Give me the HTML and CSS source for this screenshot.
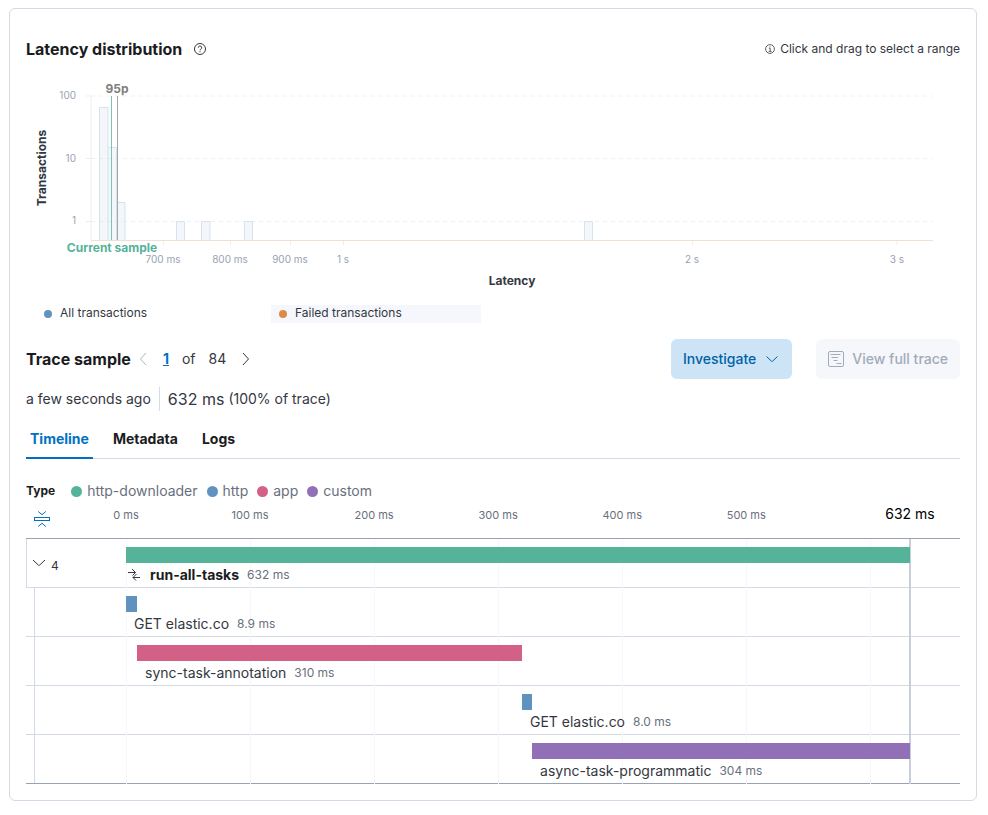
FILE: index.html
```html
<!DOCTYPE html>
<html lang="en">
<head>
<meta charset="utf-8">
<title>Latency distribution</title>
<link rel="stylesheet" href="styles.css">
</head>
<body>
<main class="panel">
  <header class="panel-header">
    <h2 class="title">Latency distribution</h2>
    <svg class="help" width="12" height="12" viewBox="0 0 12 12" role="img" aria-label="Help">
      <circle cx="6" cy="6" r="5.5"/>
      <path d="M4.3 4.7a1.7 1.7 0 1 1 2.5 1.5c-.6.3-.8.6-.8 1.2M6 8.3v1"/>
    </svg>
    <p class="hint">
      <svg width="10" height="10" viewBox="0 0 10 10" aria-hidden="true">
        <circle cx="5" cy="5" r="4.4"/>
        <path d="M3.9 4.2H5.2V7.3M3.7 7.4H6.6M5 2.3v1"/>
      </svg>
      Click and drag to select a range
    </p>
  </header>

  <svg class="chart" viewBox="26 73 934 220" role="img" aria-label="Transactions by latency">
    <g class="grid">
      <path d="M91 96H933M91 158.5H933M91 221.5H933"/>
    </g>
    <path class="axis" d="M86 96H91M86 158.5H91M86 221.5H91M91 96V240M163.5 241V245M230.5 241V245M290.5 241V245M343.5 241V245M692.5 241V245M897 241V245"/>
    <g class="histogram">
      <path d="M99.5 240V107.5H108V147.5H116.5V202.5H125V240M108 147.5V240M116.5 202.5V240"/>
      <path d="M176.5 240V221.5H184.5V240"/>
      <path d="M201.5 240V221.5H210V240"/>
      <path d="M244.5 240V221.5H252.5V240"/>
      <path d="M584.5 240V221.5H592.5V240"/>
    </g>
    <path class="baseline" d="M91 240.5H933"/>
    <path class="mark-sample" d="M111.5 96V240"/>
    <path class="mark-95p" d="M117.5 96V240"/>
    <g class="tick-y">
      <text x="76" y="99">100</text>
      <text x="76" y="162">10</text>
      <text x="76" y="224">1</text>
    </g>
    <g class="tick-x">
      <text x="163" y="263">700 ms</text>
      <text x="230" y="263">800 ms</text>
      <text x="290" y="263">900 ms</text>
      <text x="343" y="263">1 s</text>
      <text x="692" y="263">2 s</text>
      <text x="897" y="263">3 s</text>
    </g>
    <text class="note-95p" x="117" y="93">95p</text>
    <text class="note-sample" x="112" y="252">Current sample</text>
    <text class="axis-title" x="512" y="285">Latency</text>
    <text class="axis-title" transform="translate(46 168) rotate(-90)">Transactions</text>
  </svg>

  <ul class="chart-legend">
    <li><span class="dot dot-small blue"></span>All transactions</li>
    <li class="active"><span class="dot dot-small orange"></span>Failed transactions</li>
  </ul>

  <section class="trace-header">
    <h2 class="title">Trace sample</h2>
    <nav class="pager" aria-label="Trace samples">
      <button class="arrow" disabled aria-label="Previous sample">
        <svg width="8" height="14" viewBox="0 0 8 14"><path d="M7 1L1.5 7L7 13"/></svg>
      </button>
      <a class="current" href="#sample">1</a>
      <span>of</span>
      <span>84</span>
      <button class="arrow" aria-label="Next sample">
        <svg width="8" height="14" viewBox="0 0 8 14"><path d="M1 1L6.5 7L1 13"/></svg>
      </button>
    </nav>
    <div class="actions">
      <button class="button primary">Investigate
        <svg width="16" height="16" viewBox="0 0 16 16" aria-hidden="true"><path d="M2.500 5.500L7.600 10.300Q8 10.700 8.400 10.300L13.500 5.500"/></svg>
      </button>
      <button class="button muted" disabled>
        <svg width="16" height="16" viewBox="0 0 16 16" aria-hidden="true"><rect x="0.5" y="0.5" width="15" height="15" rx="1.5"/><path d="M2.500 3.500H12.500M3.500 6.500H10M5.500 9.500H9.500M8.500 12.500H13.500"/></svg>
        View full trace
      </button>
    </div>
  </section>

  <p class="summary">
    <span class="age">a few seconds ago</span>
    <span class="duration">632 ms</span>
    <span>(100% of trace)</span>
  </p>

  <nav class="tabs">
    <a class="tab selected" href="#timeline">Timeline</a>
    <a class="tab" href="#metadata">Metadata</a>
    <a class="tab" href="#logs">Logs</a>
  </nav>

  <div class="type-legend">
    <strong>Type</strong>
    <ul>
      <li><span class="dot green"></span>http-downloader</li>
      <li><span class="dot blue"></span>http</li>
      <li><span class="dot pink"></span>app</li>
      <li><span class="dot purple"></span>custom</li>
    </ul>
  </div>

  <section class="timeline" id="timeline">
    <div class="scale">
      <button class="fold" aria-label="Collapse all">
        <svg width="16" height="16" viewBox="0 0 16 16"><rect x="0.5" y="6.5" width="15" height="3"/><path d="M4.2 .5L8 3.700L11.800 .5M4.200 15.500L8 12.300L11.800 15.500"/></svg>
      </button>
      <div class="ticks">
        <span class="tick">0 ms</span>
        <span class="tick">100 ms</span>
        <span class="tick">200 ms</span>
        <span class="tick">300 ms</span>
        <span class="tick">400 ms</span>
        <span class="tick">500 ms</span>
        <span></span>
        <span class="tick total">632 ms</span>
      </div>
    </div>
    <div class="rows">
      <div class="guides" aria-hidden="true">
        <i></i><i></i><i></i><i></i><i></i><i></i><i class="last"></i>
      </div>
      <div class="row root">
        <button class="toggle" aria-expanded="true">
          <svg width="14" height="8" viewBox="0 0 14 8" aria-hidden="true"><path d="M1 1L6.600 6.300Q7 6.700 7.400 6.300L13 1"/></svg>
          <span>4</span>
        </button>
        <div class="track">
          <div class="bar green" style="width:100%"></div>
          <div class="label">
            <svg class="merge" width="12" height="12" viewBox="0 0 12 12" aria-hidden="true"><path d="M0 3.500H7.500M4 0L7.500 3.500L4.500 6.500M12 8.500H5M8.500 5L5 8.500L8 11.500"/></svg>
            <b>run-all-tasks</b><small>632 ms</small>
          </div>
        </div>
      </div>
      <div class="row">
        <div class="track">
          <div class="bar blue" style="width:1.41%"></div>
          <div class="label"><span>GET elastic.co</span><small>8.9 ms</small></div>
        </div>
      </div>
      <div class="row">
        <div class="track">
          <div class="bar pink" style="margin-left:1.41%;width:49.1%"></div>
          <div class="label" style="margin-left:1.41%"><span>sync-task-annotation</span><small>310 ms</small></div>
        </div>
      </div>
      <div class="row">
        <div class="track">
          <div class="bar blue" style="margin-left:50.51%;width:1.27%"></div>
          <div class="label" style="margin-left:50.51%"><span>GET elastic.co</span><small>8.0 ms</small></div>
        </div>
      </div>
      <div class="row">
        <div class="track">
          <div class="bar purple" style="margin-left:51.8%;width:48.2%"></div>
          <div class="label" style="margin-left:51.8%"><span>async-task-programmatic</span><small>304 ms</small></div>
        </div>
      </div>
    </div>
  </section>
</main>
</body>
</html>
```
FILE: styles.css
```css
* { box-sizing: border-box; }

body {
  margin: 0;
  padding: 8px 11px 14px 9px;
  background: #fff;
  color: #343741;
  font: 14px/20px Inter, "Liberation Sans", sans-serif;
}

h2, p, ul { margin: 0; padding: 0; }
ul { list-style: none; }
a { text-decoration: none; }
button {
  margin: 0;
  padding: 0;
  border: 0;
  background: none;
  color: inherit;
  font: inherit;
}
svg { display: block; flex: none; fill: none; stroke: currentColor; }

.panel {
  padding: 16px;
  border: 1px solid #d3dae6;
  border-radius: 6px;
}

.title {
  color: #1a1c21;
  font-size: 16px;
  font-weight: 700;
}

.panel-header { display: flex; align-items: center; height: 48px; }
.help { margin-left: 12px; }
.hint {
  display: flex;
  align-items: center;
  gap: 5px;
  margin-left: auto;
  font-size: 12px;
}
.hint svg { stroke-width: 0.8; }

/* Histogram */
.chart { width: 100%; height: auto; }
.chart text { stroke: none; }
.grid { stroke: #eef0f3; stroke-dasharray: 4 4; }
.axis { stroke: #eaedf1; }
.histogram { fill: #6092c0; fill-opacity: 0.08; stroke: #d6e3ef; }
.baseline { stroke: #f1dfd0; }
.mark-sample { stroke: #7cc4b0; }
.mark-95p { stroke: #a5a5a5; }
.tick-y, .tick-x { fill: #98a2b3; font-size: 10px; }
.tick-y { text-anchor: end; }
.tick-x { text-anchor: middle; }
.note-95p, .note-sample, .axis-title {
  font-size: 12px;
  font-weight: 700;
  text-anchor: middle;
}
.note-95p { fill: #808080; }
.note-sample { fill: #54b399; }
.axis-title { fill: #343741; }

.dot { flex: none; width: 11px; height: 11px; border-radius: 50%; }
.dot-small { width: 8px; height: 8px; margin-top: 5px; }
.green { background: #54b399; }
.blue { background: #6092c0; }
.pink { background: #d36086; }
.purple { background: #9170b8; }
.orange { background: #da8b45; }

.chart-legend {
  display: flex;
  gap: 25px;
  margin: 12px 0 16px 10px;
  font-size: 12px;
  line-height: 16px;
}
.chart-legend li {
  display: flex;
  align-items: flex-start;
  gap: 8px;
  width: 210px;
  height: 18px;
  padding-left: 8px;
}
.chart-legend .active { background: #f5f7fc; }

/* Trace sample */
.trace-header { display: flex; align-items: center; }
.pager { display: flex; align-items: center; gap: 13px; margin-left: 8px; }
.arrow { margin-right: 3px; }
.arrow:last-child { margin: 0 0 0 3px; }
.arrow:disabled { color: #abb4c4; }
.current { color: #0071c2; font-weight: 700; text-decoration: underline; }
.actions { display: flex; gap: 24px; margin-left: auto; }
.button {
  display: flex;
  align-items: center;
  gap: 8px;
  height: 40px;
  padding: 0 12px;
  border-radius: 6px;
  font-weight: 500;
}
.primary { background: #cce4f5; color: #0061a6; }
.muted { background: #f5f7fa; color: #a2abba; }

.summary {
  display: flex;
  align-items: center;
  margin: 8px 0;
  line-height: 24px;
}
.age { margin-right: 8px; padding-right: 8px; border-right: 1px solid #d3dae6; }
.duration { margin-right: 4px; font-size: 16px; }

.tabs { display: flex; gap: 16px; border-bottom: 1px solid #d3dae6; }
.tab {
  height: 40px;
  margin-bottom: -1px;
  padding: 0 4px;
  color: #1a1c21;
  font-weight: 700;
  line-height: 40px;
}
.selected { color: #0071c2; border-bottom: 2px solid #0071c2; }

.type-legend {
  display: flex;
  align-items: center;
  gap: 16px;
  margin-top: 22px;
  color: #69707d;
}
.type-legend strong { color: #1a1c21; font-size: 12px; }
.type-legend ul { display: flex; gap: 9px; }
.type-legend li { display: flex; align-items: center; gap: 5px; }

/* Waterfall */
.scale, .row { padding: 0 50px 0 100px; }
.scale { display: flex; height: 37px; padding-left: 8px; }
.fold { flex: none; width: 92px; height: 36px; color: #0071c2; }
.ticks, .guides {
  display: grid;
  grid-template-columns: repeat(6, 100fr) 32fr 0;
  flex: 1;
}
.tick {
  display: flex;
  justify-content: center;
  width: 0;
  color: #69707d;
  font-size: 11px;
  line-height: 28px;
  white-space: nowrap;
}
.total { color: #000; font-size: 14px; line-height: 26px; }

.rows { position: relative; border-top: 1px solid #98a2b3; }
.guides {
  position: absolute;
  inset: 0 50px 0 100px;
  grid-template-columns: repeat(6, 100fr) 32fr;
  pointer-events: none;
}
.guides i { border-left: 1px solid #f5f7fa; }
.guides .last { margin-right: -1px; border-right: 2px solid #c9cedb; }

.row {
  display: flex;
  height: 49px;
  padding-top: 8px;
  border-bottom: 1px solid #d3dae6;
  background: linear-gradient(#d3dae6, #d3dae6) 8px 0 / 1px 100% no-repeat;
}
.row.root { padding-left: 0; background: none; border-left: 1px solid #d3dae6; }
.row:last-child { border-bottom-color: #98a2b3; }
.toggle {
  display: flex;
  align-items: center;
  gap: 5px;
  flex: none;
  width: 99px;
  height: 32px;
  padding-left: 5px;
  font-size: 12px;
}
.toggle span { padding-top: 5px; }
.track { position: relative; flex: 1; min-width: 0; }
.bar { height: 16px; }
.label {
  display: flex;
  align-items: center;
  gap: 8px;
  height: 24px;
  padding-left: 8px;
  white-space: nowrap;
}
.label b { color: #1a1c21; }
.label small { color: #69707d; font-size: 12px; }
.root .label { padding-left: 2px; }
.merge { margin-right: 2px; }
```
